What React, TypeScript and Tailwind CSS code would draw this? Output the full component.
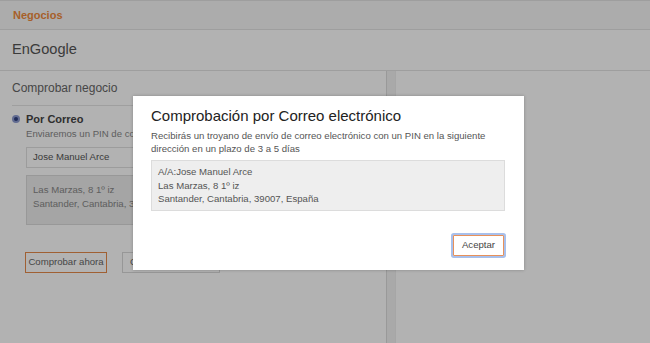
export default function App() {
  return (
    <div className="relative h-[343px] w-[650px] overflow-hidden bg-white text-[#333] [font-family:'Liberation_Sans',Arial,sans-serif]">
      {/* page underneath */}
      <div className="flex h-full flex-col">
        <div className="flex h-[30px] shrink-0 items-center border-y border-[#e2e2e2] bg-[#f6f6f6] px-[13px]">
          <span className="text-[11px] font-bold text-[#f08a3c]">Negocios</span>
        </div>
        <div className="flex h-[41px] shrink-0 items-center border-b border-[#e2e2e2] px-[12px]">
          <span className="text-[14.6px] text-[#555]">EnGoogle</span>
        </div>
        <div className="flex flex-1">
          <div className="w-[387px] shrink-0 border-r border-[#dcdcdc]">
            <div className="mx-[12px] flex h-[35px] items-center border-b border-[#e4e4e4]">
              <span className="text-[12px] text-[#666]">Comprobar negocio</span>
            </div>
            <div className="flex gap-[6px] pl-[12px] pt-[6px]">
              <div className="mt-[3px] flex h-[8px] w-[8px] shrink-0 items-center justify-center rounded-full bg-[#8d9bd0]">
                <div className="h-[4px] w-[4px] rounded-full bg-[#2e3f80]" />
              </div>
              <div className="flex-1">
                <div className="text-[11px] font-bold leading-[14px] text-[#444]">Por Correo</div>
                <div className="mt-[1px] text-[9.6px] leading-[14px] text-[#888]">Enviaremos un PIN de correo a la siguiente dirección</div>
                <div className="mt-[6px] flex h-[21px] w-[300px] items-center border border-[#e0e0e0] bg-white px-[6px] text-[9.6px] text-[#555]">
                  Jose Manuel Arce
                </div>
                <div className="mt-[7px] flex h-[50px] w-[300px] flex-col justify-center border border-[#dadada] bg-[#ececec] px-[6px] pb-[6px] text-[9.6px] leading-[14px] text-[#888]">
                  <div>Las Marzas, 8 1º iz</div>
                  <div>Santander, Cantabria, 39007, España</div>
                </div>
                <div className="mt-[27px] flex gap-[15px]">
                  <button className="-ml-[1px] h-[21px] w-[82px] whitespace-nowrap border border-[#e58a4a] bg-white text-[9.6px] text-[#666]">Comprobar ahora</button>
                  <button className="h-[21px] w-[98px] whitespace-nowrap border border-[#d8d8d8] bg-white pl-[7px] text-left text-[9.6px] text-[#666]">Cancelar</button>
                </div>
              </div>
            </div>
          </div>
          <div className="w-[8px] shrink-0 bg-[#f3f3f3]" />
          <div className="flex-1 border-l border-[#eeeeee]" />
        </div>
      </div>

      {/* overlay */}
      <div className="absolute inset-0 bg-black/30" />

      {/* modal */}
      <div className="absolute left-[133px] top-[96px] h-[174px] w-[391px] bg-white pl-[18px] pr-[19px] pt-[11px] shadow-[0_0_3px_rgba(0,0,0,0.25)]">
        <div className="text-[15px] leading-[18px] text-[#222]">Comprobación por Correo electrónico</div>
        <div className="mt-[4px] text-[9.6px] leading-[13px] text-[#555]">
          Recibirás un troyano de envío de correo electrónico con un PIN en la siguiente dirección en un plazo de 3 a 5 días
        </div>
        <div className="mt-[5px] flex h-[51px] flex-col justify-center border border-[#dcdcdc] bg-[#eeeeee] px-[6px] text-[9.6px] leading-[13.5px] text-[#555]">
          <div>A/A:Jose Manuel Arce</div>
          <div>Las Marzas, 8 1º iz</div>
          <div>Santander, Cantabria, 39007, España</div>
        </div>
        <div className="mt-[24px] flex justify-end pr-[1px]">
          <button className="h-[21px] w-[51px] rounded-[1px] border border-[#e8915a] bg-white text-[9.6px] text-[#444] ring-2 ring-[#a8c0ec]">Aceptar</button>
        </div>
      </div>
    </div>
  );
}
